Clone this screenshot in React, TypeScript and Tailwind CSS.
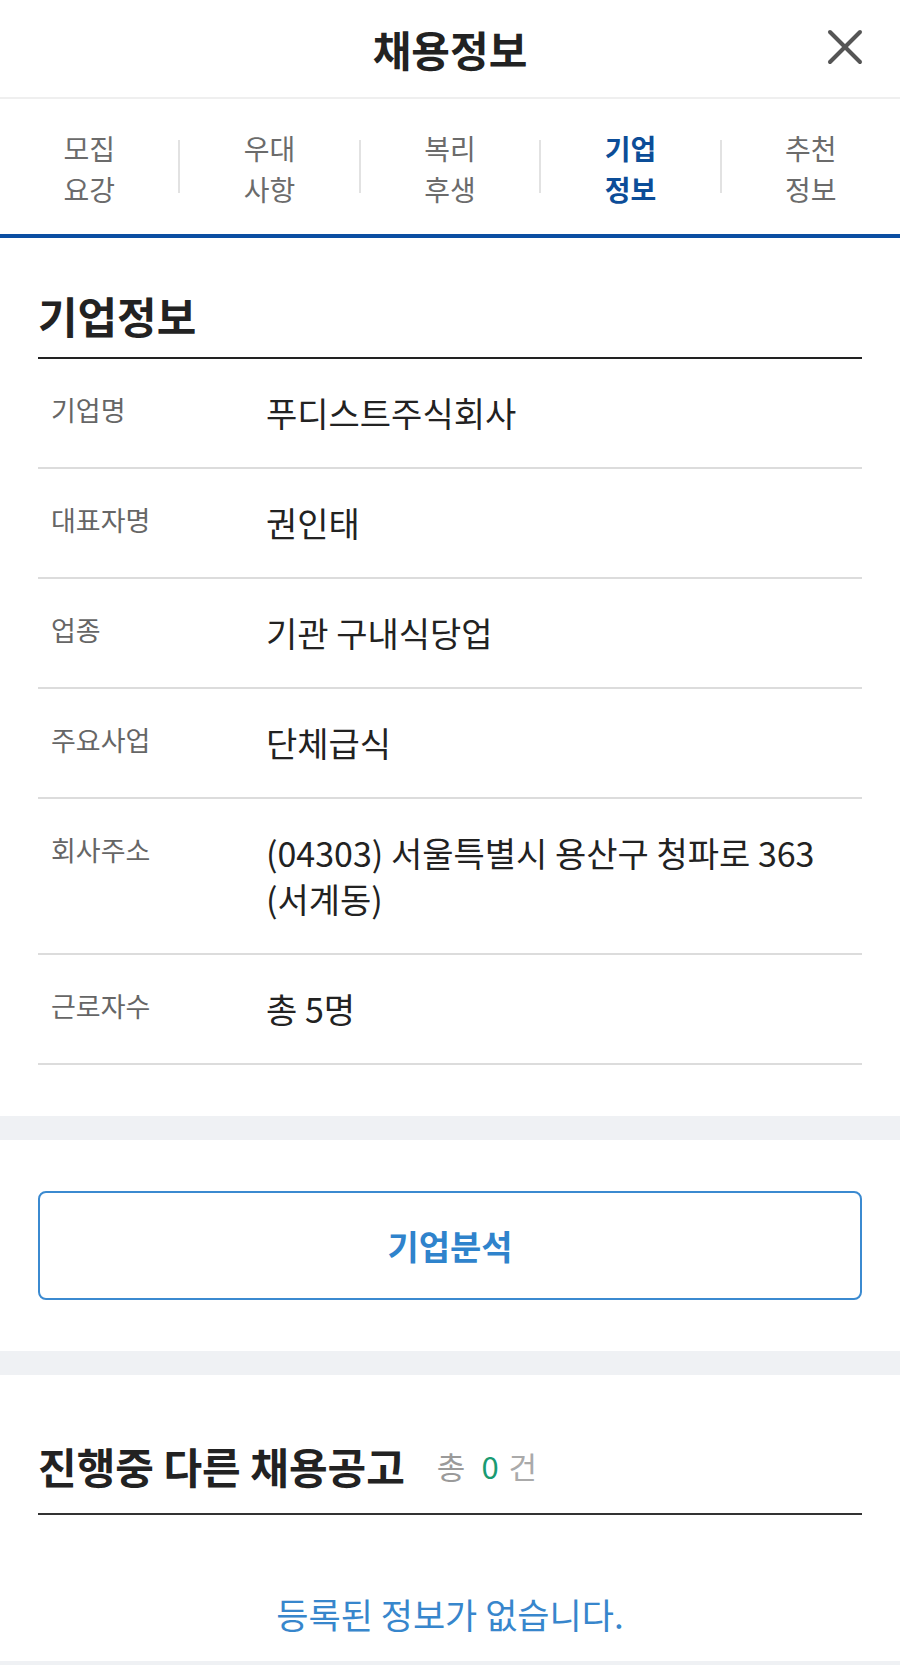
import { Fragment } from "react";

const tabs = [
  ["모집", "요강"],
  ["우대", "사항"],
  ["복리", "후생"],
  ["기업", "정보"],
  ["추천", "정보"],
];

const rows: [string, string[]][] = [
  ["기업명", ["푸디스트주식회사"]],
  ["대표자명", ["권인태"]],
  ["업종", ["기관 구내식당업"]],
  ["주요사업", ["단체급식"]],
  ["회사주소", ["(04303) 서울특별시 용산구 청파로 363", "(서계동)"]],
  ["근로자수", ["총 5명"]],
];

export default function App() {
  return (
    <div className="w-[900px] bg-white font-['Noto_Sans_CJK_KR',sans-serif] text-[#222]">
      {/* header */}
      <div className="relative flex h-[99px] items-center justify-center border-b-2 border-[#efefef]">
        <h1 className="text-[42px] font-bold leading-none">채용정보</h1>
        <button className="absolute right-[36px] top-[28px] h-[38px] w-[38px]">
          <svg viewBox="0 0 38 38" className="h-full w-full" fill="none" stroke="#555" strokeWidth="4" strokeLinecap="round">
            <line x1="4" y1="4" x2="34" y2="34" />
            <line x1="34" y1="4" x2="4" y2="34" />
          </svg>
        </button>
      </div>

      {/* tabs */}
      <div className="flex h-[135px] items-center pt-[4px]">
        {tabs.map((t, i) => (
          <Fragment key={i}>
            {i > 0 && <div className="-mt-[4px] h-[53px] w-[2px] bg-[#e2e2e2]" />}
            <div
              className={
                "flex-1 text-center text-[28px] leading-[41px] " +
                (i === 3 ? "font-bold text-[#0c4d98]" : "text-[#6b6b6b]")
              }
            >
              <div>{t[0]}</div>
              <div>{t[1]}</div>
            </div>
          </Fragment>
        ))}
      </div>
      <div className="h-[4px] bg-[#0b4ea2]" />

      {/* company info */}
      <section className="px-[38px] pb-[51px] pt-[52px]">
        <div className="border-b-2 border-[#222] pb-[17px]">
          <h2 className="text-[43px] font-bold leading-[50px]">기업정보</h2>
        </div>
        {rows.map(([label, value]) => (
          <div key={label} className="flex border-b-2 border-[#dcdcdc] py-[31px]">
            <div className="w-[228px] shrink-0 pl-[13px] text-[27px] leading-[40px] text-[#666]">{label}</div>
            <div className="text-[34px] leading-[46px] text-[#222]">
              {value.map((v, i) => (
                <div key={i} className="whitespace-nowrap">{v}</div>
              ))}
            </div>
          </div>
        ))}
      </section>

      <div className="h-[24px] bg-[#eff1f4]" />

      <section className="px-[38px] py-[51px]">
        <button className="flex h-[109px] w-full items-center justify-center rounded-[8px] border-2 border-[#3b8ad0] text-[34px] font-bold text-[#2f83cc]">
          기업분석
        </button>
      </section>

      <div className="h-[24px] bg-[#eff1f4]" />

      <section className="px-[38px] pt-[66px]">
        <div className="flex items-center border-b-2 border-[#333] pb-[22px]">
          <h2 className="text-[42px] font-bold leading-[50px]">진행중 다른 채용공고</h2>
          <span className="ml-[32px] flex text-[31px] leading-[50px] text-[#9a9a9a]">
            <span>총</span>
            <span className="ml-[16px] text-[#1a9b72]">0</span>
            <span className="ml-[10px] text-[#aaa]">건</span>
          </span>
        </div>
        <p className="pb-[24px] pt-[76px] text-center text-[35px] leading-[46px] text-[#3786cc]">
          등록된 정보가 없습니다.
        </p>
      </section>
      <div className="h-[40px] bg-[#eff1f4]" />
    </div>
  );
}
